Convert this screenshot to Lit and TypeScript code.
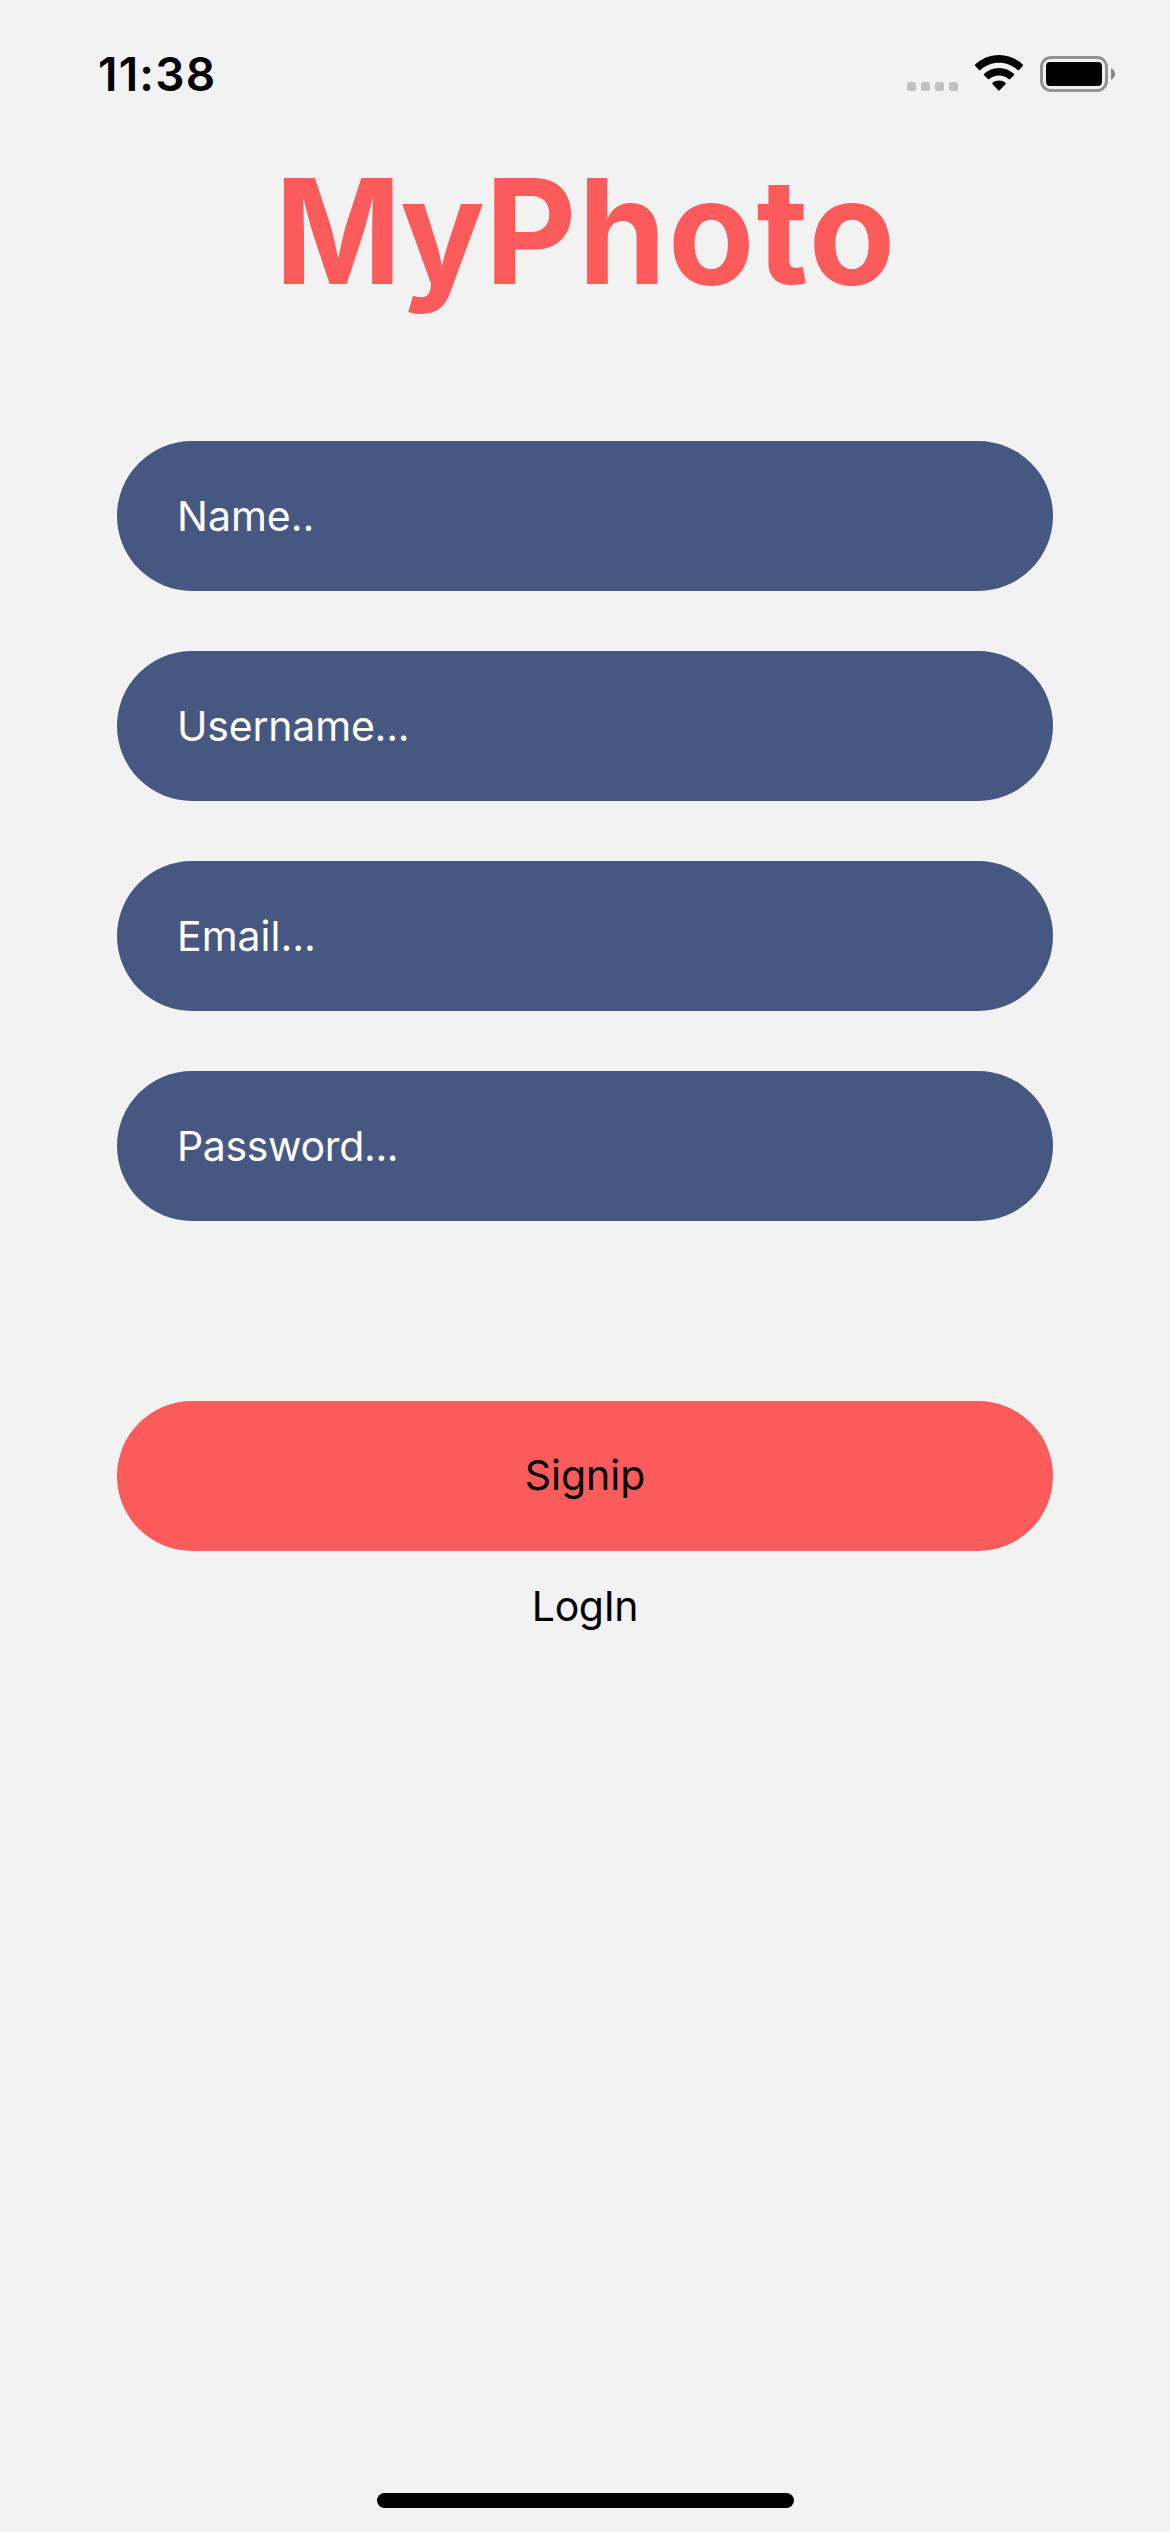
import { LitElement, html, css } from "lit";
import { customElement } from "lit/decorators.js";
import { classMap } from "lit/directives/class-map.js";

@customElement("status-bar")
export class StatusBar extends LitElement {
  static styles = css`
    :host {
      display: flex;
      justify-content: space-between;
      align-items: flex-start;
      padding: 46px 54px 0 98px;
      color: #000;
    }
    .time {
      font-size: 46px;
      line-height: 56px;
      font-weight: 600;
      letter-spacing: 1.2px;
    }
    .icons {
      display: flex;
      align-items: flex-end;
      gap: 16px;
      height: 46px;
    }
    svg {
      display: block;
    }
  `;

  render() {
    return html`
      <span class="time">11:38</span>
      <div class="icons">
        <svg width="51" height="10" viewBox="0 0 51 10" fill="#c1c1c1">
          <rect x="0" y="0" width="9" height="9" rx="2.6" />
          <rect x="14" y="0" width="9" height="9" rx="2.6" />
          <rect x="28" y="0" width="9" height="9" rx="2.6" />
          <rect x="42" y="0" width="9" height="9" rx="2.6" />
        </svg>
        <svg width="50" height="37" viewBox="0 0 50 37" fill="#000">
          <path
            d="M25 0C34.2 0 42.6 3.6 48.8 9.5Q49.6 10.3 48.8 11.1L45 14.9Q44.3 15.6 43.5 14.9C38.6 10.4 32.1 7.7 25 7.7S11.4 10.4 6.5 14.9Q5.7 15.6 5 14.9L1.2 11.1Q.4 10.3 1.2 9.5C7.4 3.6 15.8 0 25 0Z"
          />
          <path
            d="M25 12.9C30.8 12.9 36 15.1 39.9 18.7Q40.7 19.4 39.9 20.2L36.1 24Q35.4 24.7 34.6 24C32 21.8 28.7 20.5 25 20.5S18 21.8 15.4 24Q14.6 24.7 13.9 24L10.1 20.2Q9.3 19.4 10.1 18.7C14 15.1 19.2 12.9 25 12.9Z"
          />
          <path
            d="M25 25.5C27.4 25.5 29.6 26.3 31.4 27.7Q32.2 28.4 31.4 29.2L25.8 35.3Q25 36.1 24.2 35.3L18.6 29.2Q17.8 28.4 18.6 27.7C20.4 26.3 22.6 25.5 25 25.5Z"
          />
        </svg>
        <svg width="76" height="36" viewBox="0 0 76 36">
          <rect x="1.5" y="1.5" width="65" height="33" rx="9.5" fill="none" stroke="#939393" stroke-width="3" />
          <rect x="6" y="6" width="56" height="24" rx="4" fill="#000" />
          <path d="M71 12.3C73.5 13.4 75 15.5 75 18S73.5 22.6 71 23.7Z" fill="#868686" />
        </svg>
      </div>
    `;
  }
}

interface Field {
  key: string;
  hint: string;
}

const FIELDS: Field[] = [
  { key: "name", hint: "Name.." },
  { key: "username", hint: "Username..." },
  { key: "email", hint: "Email..." },
  { key: "password", hint: "Password..." },
];

@customElement("app-root")
export class AppRoot extends LitElement {
  static styles = css`
    :host {
      display: block;
      font-family: Inter, "Liberation Sans", sans-serif;
    }
    .screen {
      box-sizing: border-box;
      width: 1170px;
      height: 2532px;
      display: flex;
      flex-direction: column;
      background: #f2f2f2;
      overflow: hidden;
    }
    .logo {
      margin: 41px 0 0;
      font-size: 146px;
      line-height: 176px;
      font-weight: 700;
      color: #fb5b5a;
      text-align: center;
      transform: scaleX(0.967);
    }
    .cap {
      display: inline-block;
      margin-right: -6.5px;
      transform: scaleX(0.96);
      transform-origin: 9px 50%;
    }
    .tail {
      letter-spacing: 1.9px;
      margin-right: -1.9px;
    }
    .form {
      display: flex;
      flex-direction: column;
      gap: 60px;
      padding: 122px 117px 0;
    }
    .field,
    .button {
      box-sizing: border-box;
      display: flex;
      align-items: center;
      height: 150px;
      border-radius: 75px;
      font-size: 41px;
      line-height: 50px;
    }
    .field {
      padding: 0 60px;
      background: #465881;
      color: #fff;
    }
    .username {
      letter-spacing: -0.2px;
    }
    .password {
      letter-spacing: -0.35px;
    }
    .button {
      justify-content: center;
      margin: 180px 117px 0;
      padding-bottom: 2px;
      background: #fb5b5a;
      color: #000;
    }
    .login {
      margin-top: 30px;
      font-size: 41px;
      line-height: 50px;
      letter-spacing: -0.35px;
      text-align: center;
      color: #000;
    }
    .home {
      width: 417px;
      height: 15px;
      margin: auto auto 24px;
      border-radius: 7.5px;
      background: #000;
    }
  `;

  render() {
    return html`
      <div class="screen">
        <status-bar></status-bar>
        <h1 class="logo"><span class="cap">M</span>y<span class="tail">Photo</span></h1>
        <div class="form">
          ${FIELDS.map(
            (f) => html`<div class="field ${classMap({ [f.key]: true })}"><span>${f.hint}</span></div>`
          )}
        </div>
        <div class="button">Signip</div>
        <div class="login">LogIn</div>
        <div class="home"></div>
      </div>
    `;
  }
}
